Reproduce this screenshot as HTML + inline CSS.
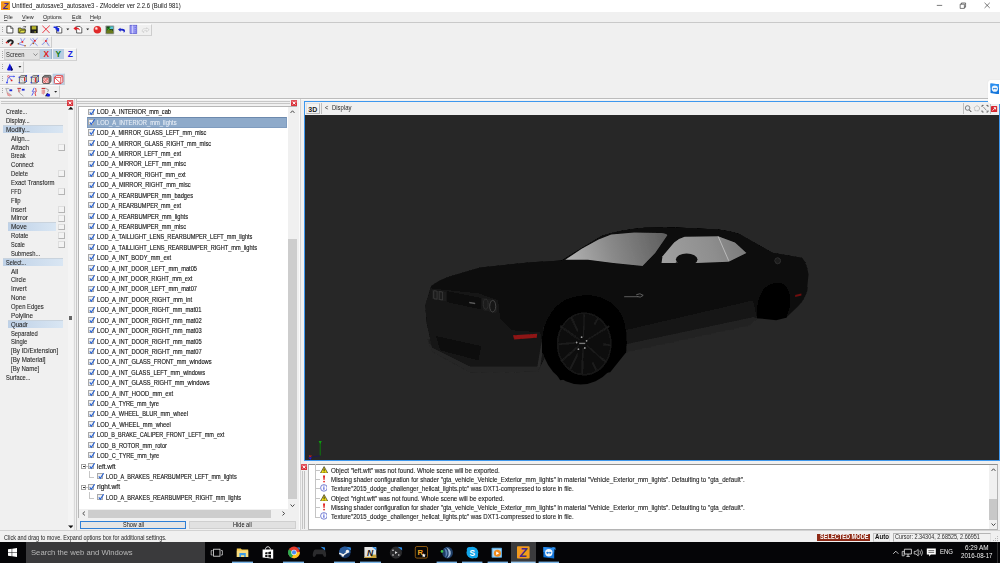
<!DOCTYPE html>
<html><head><meta charset="utf-8"><title>ZModeler</title>
<style>
*{box-sizing:border-box;margin:0;padding:0}
html,body{width:1000px;height:563px;overflow:hidden;background:#f0f0f0}
body{position:relative;font-family:"Liberation Sans",sans-serif;font-size:5.9px;color:#000;-webkit-font-smoothing:antialiased}
div,span,svg{position:absolute}
.t{white-space:nowrap}
#title{left:0;top:0;width:1000px;height:11.6px;background:#fff}
#title .tt{left:12.2px;top:1.5px;font-size:6.6px;line-height:8px;color:#111;white-space:nowrap}
#menubar{left:0;top:11.6px;width:1000px;height:11.3px;background:#f0f0f0;border-bottom:1px solid #c9c9c9}
#menubar span{top:1.6px;font-size:6.1px;line-height:8px;color:#222;white-space:nowrap;transform:scaleX(.89);transform-origin:0 0}
#menubar u{text-decoration-thickness:0.5px;text-underline-offset:0.5px;text-decoration-color:#666}
.tb{background:#f0f0f0;border-right:0.6px solid #cdcdcd;border-bottom:0.6px solid #d2d2d2;border-top:0.5px solid #fafafa}
.grip{left:1.6px;width:1px;top:2px;bottom:2px;background:repeating-linear-gradient(#a8a8a8 0 0.8px,transparent 0.8px 1.9px)}
/* left menu */
.mi{-webkit-text-stroke:0.1px #2a2a2a;font-size:6.5px;line-height:8.854px;height:8.854px;white-space:nowrap;color:#2a2a2a;transform-origin:0 0}
.hl{height:8.6px;background:linear-gradient(90deg,#bed1e7,#d9e6f3);border-top:0.5px solid #c9d3dd}
.ob{left:57.8px;width:6.8px;height:6.8px;border:0.5px solid #dedede;border-right-color:#b4b4b4;border-bottom-color:#b4b4b4;background:#f3f3f3}
/* list */
.li{-webkit-text-stroke:0.14px #161616;font-size:6.5px;line-height:10.4px;height:10.4px;white-space:nowrap;color:#161616;transform-origin:0 0}
.li.sel{color:#e8eef6;-webkit-text-stroke:0.1px #e8eef6}
.selbg{left:87.2px;width:199.6px;height:10.5px;background:#8eaaca;border:0.6px solid #7f9cbf;border-top-color:#6c89ad}
.cb{width:6.1px;height:6.1px;border:0.55px solid #a9a9a9;background:#efefef}
.cb svg{left:0;top:0;width:5.3px;height:5.3px;overflow:visible}
.cb svg path{fill:none;stroke:#2460d4;stroke-width:2.7}
.lg{-webkit-text-stroke:0.1px #1a1a1a;font-size:6.4px;line-height:9.375px;height:9.375px;white-space:nowrap;color:#1a1a1a;transform-origin:0 0}
</style></head><body>
<!-- title bar -->
<div id="title">
 <svg style="left:1px;top:1px;width:9px;height:9.4px" viewBox="0 0 18 18"><rect width="18" height="18" rx="1" fill="#f29a1c"/><text x="9" y="15" font-family="Liberation Sans,sans-serif" font-weight="bold" font-style="italic" font-size="17" text-anchor="middle" fill="#4a2a8a">Z</text></svg>
 <span class="tt" style="transform:scaleX(0.9093);transform-origin:0 0">Untitled_autosave3_autosave3 - ZModeler ver 2.2.6 (Build 981)</span>
 <svg style="left:862px;top:0;width:138px;height:11.6px" viewBox="0 0 138 11.6" fill="none" stroke="#222" stroke-width="0.6">
  <path d="M74.800 5.400h5.400"/><path d="M98.200 4.200h4.200v4.200h-4.200z M99.400 4.200v-1.200h4.200v4.200h-1.200"/><path d="M122.600 2.800l5.200 5.200m0-5.200l-5.200 5.200"/></svg>
</div>
<div id="menubar">
 <span style="left:4px"><u>F</u>ile</span><span style="left:22px"><u>V</u>iew</span><span style="left:43px"><u>O</u>ptions</span><span style="left:71.5px"><u>E</u>dit</span><span style="left:90px"><u>H</u>elp</span>
</div>
<!-- toolbars -->
<div class="tb" id="tb1" style="left:0;top:23.6px;width:152px;height:12.2px"><div class="grip"></div></div>
<div class="tb" id="tb2" style="left:0;top:35.8px;width:52px;height:12.2px"><div class="grip"></div></div>
<div class="tb" id="tb3" style="left:0;top:48px;width:76.6px;height:12.6px"><div class="grip"></div></div>
<div class="tb" id="tb4" style="left:0;top:60.6px;width:23.8px;height:12px"><div class="grip"></div></div>
<div class="tb" id="tb5" style="left:0;top:72.6px;width:64.8px;height:12.8px"><div class="grip"></div></div>
<div class="tb" id="tb6" style="left:0;top:85.4px;width:59.8px;height:12.2px"><div class="grip"></div></div>
<div style="left:0;top:97.9px;width:1000px;height:0.8px;background:#bcbcbc"></div>
<div style="left:0;top:98.7px;width:1000px;height:0.6px;background:#fafafa"></div>
<!-- toolbar row 1 icons -->
<svg style="left:0;top:23px;width:160px;height:76px" viewBox="0 23 160 76" fill="none">
 <!-- new -->
 <path d="M6.9 26.2h3.8l2.2 2.2v4.6H6.9z" fill="#fff" stroke="#222" stroke-width="0.75"/><path d="M10.7 26.2v2.2h2.2" stroke="#222" stroke-width="0.6"/>
 <!-- open -->
 <path d="M18.3 28h2.6l0.7 0.9h3.6v4H18.3z" fill="#b8b820" stroke="#222" stroke-width="0.7"/><path d="M19.2 32.9l1.6-2.7h5l-1.6 2.7z" fill="#e2e04a" stroke="#222" stroke-width="0.6"/><path d="M22.8 27.3c1-1 2-1 2.8-.2m0 0v-1m0 1h-1" stroke="#222" stroke-width="0.6"/>
 <!-- save -->
 <rect x="30.3" y="25.7" width="7.4" height="7.4" fill="#161616"/><rect x="31.7" y="26.2" width="4.6" height="3.3" fill="#b4b22a"/><rect x="32" y="30.6" width="4" height="2.5" fill="#2a2a2a"/><rect x="34.6" y="31" width="1" height="1.8" fill="#b4b22a"/>
 <!-- delete X -->
 <path d="M42.4 25.8c2.4 2.2 5 4.6 7.2 7.2M49.8 25.6c-2.6 2.2-5 4.6-7.4 7.4" stroke="#e8202a" stroke-width="0.85"/>
 <!-- import -->
 <path d="M56.6 26.6h3.4l1.8 1.8v4.6h-5.2z" fill="#fff" stroke="#222" stroke-width="0.7"/><path d="M53.6 26.4h4v1.6h1.6v3.4h-2.4v-1.8h-1.4v-1.6h-1.8z" fill="#1428e0"/>
 <path d="M66.3 28.6h3l-1.5 1.7z" fill="#222"/>
 <!-- export -->
 <path d="M76.6 26.4h3.4l1.8 1.8v4.8h-5.2z" fill="#fff" stroke="#222" stroke-width="0.7"/><path d="M73.4 28.4l2.6-2.2v1.3c2.2 0 3.8 1 4 3.2-0.9-1.2-2-1.6-4-1.5v1.4z" fill="#e81c24"/>
 <path d="M86.2 28.6h3l-1.5 1.7z" fill="#222"/>
 <!-- red ball -->
 <circle cx="97.4" cy="29.7" r="3.8" fill="#e02a2a"/><circle cx="96.4" cy="28.6" r="1.5" fill="#f6a0a0"/><circle cx="96.2" cy="28.3" r="0.7" fill="#fff"/>
 <!-- image (pressed) -->
 <rect x="105.4" y="25.4" width="8.8" height="8.8" rx="0.8" fill="#9c9c9c"/><rect x="106.4" y="26.4" width="6.8" height="6.8" fill="#1c4a1c"/><path d="M106.4 31.2l2-2.4 1.6 1.6 1.2-1 2 2v1.8h-6.8z" fill="#6a7a1a"/><rect x="109.8" y="26.4" width="3.4" height="2.6" fill="#58c0d8"/><path d="M107.4 28.4l1.2 1.4 1.8-2.6" stroke="#22d022" stroke-width="0.8"/>
 <!-- undo -->
 <path d="M118 29.6l2.6-1.8v1.1c2.6-.6 4.4.3 4.4 2 0 .9-.6 1.4-1.6 1.6.7-.9.4-2.1-2.8-1.9v1.2z" fill="#1a24c8"/>
 <!-- door -->
 <rect x="130" y="25.2" width="6.8" height="8.4" fill="#9a9af4" stroke="#4a4ac8" stroke-width="0.6"/><path d="M132.6 25.4v8" stroke="#d8d8ff" stroke-width="0.9"/><path d="M135.2 27v1M135.2 29.2v1M135.2 31.4v1" stroke="#4a4ac8" stroke-width="0.6"/>
 <!-- redo (disabled) -->
 <path d="M149.2 29.6l-2.6-1.8v1.1c-2.6-.6-4.4.3-4.4 2 0 .9.6 1.4 1.6 1.6-.7-.9-.4-2.1 2.8-1.9v1.2z" fill="#f4f4f4" stroke="#b4b4b4" stroke-width="0.45"/>

 <!-- row 2 -->
 <path d="M6.6 41.4c1.6-2.4 4.6-2.8 6.4-1.2 1 .9 1 2.2.2 3.2l-1.4 1.6-1.4-1.2 1.2-1.4c.5-.7-.9-1.7-2.2-.4l-1 1.2z" fill="#202020"/><path d="M6.4 41.6l1.5 1.2-.9 1-1.5-1.2zM10.3 43.9l1.5 1.2-.9 1-1.5-1.2z" fill="#e01c1c"/>
 <path d="M20.6 38.2l1.8 3.6 2.6-3.6M22.4 41.8l-4.2 2 6.8 2" stroke="#4a5ae8" stroke-width="0.6"/><circle cx="22.4" cy="41.9" r="0.95" fill="#f02020"/><circle cx="18.3" cy="43.8" r="0.8" fill="#b05a10"/><circle cx="25.1" cy="45.8" r="0.8" fill="#b05a10"/>
 <path d="M30 38.6l7.6 7.2M37.6 38.2l-7.8 7.6M32.6 38l2.4 3.6" stroke="#4a5ae8" stroke-width="0.6"/><circle cx="34.9" cy="40.8" r="0.95" fill="#f02020"/><circle cx="33.3" cy="43.4" r="0.8" fill="#b05a10"/>
 <path d="M43.8 38v8.4M47.6 38v8.4M41.6 40h8.6M41.6 43.8h8.6" stroke="#d8d8d8" stroke-width="0.5"/><path d="M47.6 38l-1.8 3-4 4M45.8 41l3.6 5.2" stroke="#4a5ae8" stroke-width="0.6"/><circle cx="45.9" cy="41" r="0.95" fill="#f02020"/>

 <!-- row 4 cone -->
 <path d="M9.8 63.4l3 6c0 1.6-5.8 1.6-5.8 0z" fill="#1418e0"/><path d="M10.8 65.6l2 3.8c0 .8-.8 1.2-1.6 1.3z" fill="#0a0a50"/>
 <path d="M18.4 66h3l-1.5 1.7z" fill="#222"/>

 <!-- row 5 -->
 <path d="M8.6 76.4h5.8M8.6 76.4L7 82.4M8.6 76.4l2.8 4" stroke="#2a3cf0" stroke-width="0.7"/><circle cx="8.4" cy="76.4" r="0.9" fill="#fff" stroke="#e02020" stroke-width="0.5"/><circle cx="11.6" cy="80.4" r="0.9" fill="#e02020"/><circle cx="7" cy="82.6" r="0.9" fill="#2a3cf0"/><path d="M13.6 75.4l1.4 1-1.4 1z" fill="#2a3cf0"/>
 <g id="cube1" stroke="#333" stroke-width="0.7"><path d="M19.4 77.2h5.4v5.8h-5.4z" fill="#e8e8e8"/><path d="M19.4 77.2l1.8-1.6h5.2l-1.6 1.6M26.4 75.600v5.600l-1.600 1.800" fill="none"/><path d="M20.600 78.600l3 3.600" stroke="#888" stroke-width="0.4"/></g>
 <path d="M24.6 77.4v3.600" stroke="#e82020" stroke-width="1"/><circle cx="19.200" cy="77.200" r="0.7" fill="#2a3cf0"/><circle cx="26.4" cy="75.800" r="0.7" fill="#2a3cf0"/><circle cx="19.200" cy="82.800" r="0.7" fill="#2a3cf0"/><circle cx="26.400" cy="81.200" r="0.700" fill="#2a3cf0"/>
 <g stroke="#333" stroke-width="0.7"><path d="M31.4 77.2h5.4v5.8h-5.4z" fill="#e8e8e8"/><path d="M31.4 77.2l1.8-1.6h5.2l-1.6 1.6M38.4 75.600v5.600l-1.600 1.800" fill="none"/><path d="M32.600 78.600l3 3.600" stroke="#888" stroke-width="0.4"/></g>
 <path d="M35.4 77.800v4.400" stroke="#e82020" stroke-width="1.1"/><circle cx="31.200" cy="77.200" r="0.7" fill="#2a3cf0"/><circle cx="38.4" cy="75.800" r="0.7" fill="#2a3cf0"/><circle cx="31.200" cy="82.800" r="0.7" fill="#2a3cf0"/><circle cx="38.400" cy="81.200" r="0.700" fill="#2a3cf0"/>
 <g stroke="#333" stroke-width="0.75"><path d="M44.6 75.400h5.200c.8 0 1.200.4 1.200 1.200v5l-1.800 1.800h-5.400c-.8 0-1.200-.4-1.200-1.200v-5z" fill="#8a8a8a"/><path d="M42.800 77.200h6.200v6" fill="none"/></g><rect x="43.200" y="77.600" width="5.400" height="5.400" fill="#f4c8c8"/><path d="M43.200 77.600l5.400 5.400M43.200 80.200l2.800 2.800M45.800 77.600l2.800 2.800M48.600 77.600l-5.400 5.400" stroke="#e02020" stroke-width="0.5"/>
 <rect x="52.600" y="73.600" width="11.600" height="11.200" fill="#b9cde2"/>
 <g stroke="#e02428" stroke-width="0.8"><path d="M56.400 75.600h5.200c.8 0 1.200.4 1.200 1.200v5l-1.800 1.800h-5.400c-.8 0-1.200-.4-1.200-1.200v-5z" fill="#fff"/><path d="M54.600 77.400h6.200v6M60.800 77.400l1.800-1.600" fill="none"/><path d="M55 78l5.400 5" /></g>

 <!-- row 6 -->
 <path d="M5.400 88.600h3.800M6 88.600l1.200 3.600 4.800 3.400" stroke="#9a9a9a" stroke-width="0.7"/><path d="M6.600 92.800l4.200 3M7 94.600l2.800 1.400" stroke="#e06a6a" stroke-width="0.8"/><rect x="9.400" y="89.400" width="2.800" height="1.800" fill="#1c28d8"/>
 <path d="M17.400 88.400h3.600" stroke="#c02020" stroke-width="0.9"/><path d="M18.200 89l1.400 4 3.800 3" stroke="#9a9a9a" stroke-width="0.7"/><path d="M18.600 89.400v2.800M19.800 89.400v2.400" stroke="#d85050" stroke-width="0.6"/><rect x="21.800" y="88.800" width="2.800" height="1.800" fill="#1c28d8"/>
 <path d="M34.200 87.800l-1.800 3.800 1 1-1.600 3" stroke="#2a3cf0" stroke-width="0.8"/><path d="M35.600 88l.6 3.400-1.200 1.600.8 3" stroke="#e02020" stroke-width="0.8"/><path d="M33 91.600h2.800" stroke="#8060c0" stroke-width="0.7"/>
 <path d="M41.600 88.400h3.800" stroke="#c02020" stroke-width="1"/><path d="M42.200 89.600v4.400M43.400 89.600v5M44.600 89.600v4" stroke="#e05050" stroke-width="0.6"/><path d="M45.600 88.400l3 1.400-1 2.200" stroke="#8a8a8a" stroke-width="0.8"/><path d="M45 96.200l2.200-3.400 2.600 3.400z" fill="#111"/><ellipse cx="48.200" cy="95" rx="1.900" ry="1.500" fill="#1418e8"/>
 <path d="M54.200 91h3l-1.500 1.700z" fill="#222"/>
</svg>
<!-- row 3 -->
<div style="left:4px;top:48.8px;width:35.6px;height:10.8px;background:#e1e1e1;border:0.5px solid #d2d2d2"></div>
<div class="t" style="left:5.6px;top:50.8px;font-size:6.6px;line-height:8px;color:#2a2a2a;transform:scaleX(.885);transform-origin:0 0">Screen</div>
<svg style="left:33px;top:53.2px;width:5px;height:3.2px" viewBox="0 0 10 6.400" fill="none" stroke="#444" stroke-width="1.1"><path d="M0.800 1l4.200 4.200L9.200 1"/></svg>
<div style="left:40.200px;top:49px;width:12px;height:10.400px;background:#b9cde2;border-right:0.5px solid #9ab0c8"></div>
<div style="left:52.600px;top:49px;width:11.600px;height:10.400px;background:#b9cde2"></div>
<div class="t" style="left:40.200px;top:49.600px;width:12px;text-align:center;font-size:8.400px;line-height:9.800px;font-weight:bold;color:#e01a1a">X</div>
<div class="t" style="left:52.600px;top:49.600px;width:11.600px;text-align:center;font-size:8.400px;line-height:9.800px;font-weight:bold;color:#0c7a14">Y</div>
<div class="t" style="left:64.600px;top:49.600px;width:11.600px;text-align:center;font-size:8.400px;line-height:9.800px;font-weight:bold;color:#1c20e0">Z</div>
<!-- left command panel -->
<div style="left:1px;top:101.3px;width:65.5px;height:0.5px;background:#c6c6c6"></div>
<div style="left:1px;top:103.3px;width:65.5px;height:0.5px;background:#c6c6c6"></div>
<svg class="xb" style="left:67.4px;top:99.6px;width:6.2px;height:6.2px" viewBox="0 0 12 12"><rect width="12" height="12" rx="1.5" fill="#d8323a"/><rect x="0.6" y="0.6" width="10.8" height="5" rx="1" fill="#ea6a70" opacity=".7"/><path d="M3.4 3.4l5.2 5.2m0-5.2l-5.2 5.2" stroke="#fff" stroke-width="1.9"/></svg>
<div id="vline73" style="left:68.2px;top:106px;width:5.2px;height:424px;background:#f4f4f4"></div>
<div style="left:73.6px;top:99px;width:0.5px;height:431px;background:#dadada"></div>
<div style="left:76.2px;top:99px;width:0.5px;height:431px;background:#c8c8c8"></div>
<svg style="left:67.6px;top:106.2px;width:5.6px;height:4px" viewBox="0 0 12 8"><path d="M1 6.5L6 1.2 11 6.5z" fill="#111"/><path d="M0.5 7.6h11" stroke="#111" stroke-width="1"/></svg>
<svg style="left:67.8px;top:524.8px;width:5.6px;height:4px" viewBox="0 0 12 8"><path d="M1 1.5L6 6.8 11 1.5z" fill="#111"/><path d="M0.5 0.4h11" stroke="#111" stroke-width="1"/></svg>
<div style="left:68.9px;top:316.2px;width:3px;height:3.6px;background:#666"></div>
<div class="mi" style="left:6px;top:108.20px;transform:scaleX(0.8424)">Create...</div>
<div class="mi" style="left:6px;top:117.05px;transform:scaleX(0.9029)">Display...</div>
<div class="hl" style="left:3px;width:60px;top:124.71px"></div>
<div class="mi" style="left:6px;top:125.91px;transform:scaleX(0.9842)">Modify...</div>
<div class="mi" style="left:11px;top:134.76px;transform:scaleX(0.9410)">Align...</div>
<div class="ob" style="top:143.92px"></div>
<div class="mi" style="left:11px;top:143.62px;transform:scaleX(0.9714)">Attach</div>
<div class="mi" style="left:11px;top:152.47px;transform:scaleX(0.8598)">Break</div>
<div class="mi" style="left:11px;top:161.32px;transform:scaleX(0.9335)">Connect</div>
<div class="ob" style="top:170.48px"></div>
<div class="mi" style="left:11px;top:170.18px;transform:scaleX(0.9048)">Delete</div>
<div class="mi" style="left:11px;top:179.03px;transform:scaleX(0.9193)">Exact Transform</div>
<div class="ob" style="top:188.19px"></div>
<div class="mi" style="left:11px;top:187.89px;transform:scaleX(0.8310)">FFD</div>
<div class="mi" style="left:11px;top:196.74px;transform:scaleX(0.9165)">Flip</div>
<div class="ob" style="top:205.89px"></div>
<div class="mi" style="left:11px;top:205.59px;transform:scaleX(0.9289)">Insert</div>
<div class="ob" style="top:214.75px"></div>
<div class="mi" style="left:11px;top:214.45px;transform:scaleX(1.0019)">Mirror</div>
<div class="hl" style="left:8px;width:47.5px;top:222.10px"></div>
<div class="ob" style="top:223.60px"></div>
<div class="mi" style="left:11px;top:223.30px;transform:scaleX(0.9877)">Move</div>
<div class="ob" style="top:232.46px"></div>
<div class="mi" style="left:11px;top:232.16px;transform:scaleX(0.9086)">Rotate</div>
<div class="ob" style="top:241.31px"></div>
<div class="mi" style="left:11px;top:241.01px;transform:scaleX(0.8487)">Scale</div>
<div class="mi" style="left:11px;top:249.86px;transform:scaleX(0.8912)">Submesh...</div>
<div class="hl" style="left:3px;width:60px;top:257.52px"></div>
<div class="mi" style="left:6px;top:258.72px;transform:scaleX(0.8559)">Select...</div>
<div class="mi" style="left:11px;top:267.57px;transform:scaleX(0.9967)">All</div>
<div class="mi" style="left:11px;top:276.43px;transform:scaleX(0.8969)">Circle</div>
<div class="mi" style="left:11px;top:285.28px;transform:scaleX(0.9658)">Invert</div>
<div class="mi" style="left:11px;top:294.13px;transform:scaleX(0.9588)">None</div>
<div class="mi" style="left:11px;top:302.99px;transform:scaleX(0.9062)">Open Edges</div>
<div class="mi" style="left:11px;top:311.84px;transform:scaleX(0.9665)">Polyline</div>
<div class="hl" style="left:8px;width:55px;top:319.50px"></div>
<div class="mi" style="left:11px;top:320.70px;transform:scaleX(0.9299)">Quadr</div>
<div class="mi" style="left:11px;top:329.55px;transform:scaleX(0.8934)">Separated</div>
<div class="mi" style="left:11px;top:338.40px;transform:scaleX(0.9021)">Single</div>
<div class="mi" style="left:11px;top:347.26px;transform:scaleX(0.9467)">[By ID/Extension]</div>
<div class="mi" style="left:11px;top:356.11px;transform:scaleX(0.9551)">[By Material]</div>
<div class="mi" style="left:11px;top:364.97px;transform:scaleX(0.9294)">[By Name]</div>
<div class="mi" style="left:6px;top:373.82px;transform:scaleX(0.8771)">Surface...</div><!-- object list panel -->
<div style="left:76px;top:101.3px;width:214px;height:0.5px;background:#c6c6c6"></div>
<div style="left:76px;top:103.3px;width:214px;height:0.5px;background:#c6c6c6"></div>
<svg class="xb" style="left:291.2px;top:99.6px;width:6.2px;height:6.2px" viewBox="0 0 12 12"><rect width="12" height="12" rx="1.5" fill="#d8323a"/><rect x="0.6" y="0.6" width="10.8" height="5" rx="1" fill="#ea6a70" opacity=".7"/><path d="M3.4 3.4l5.2 5.2m0-5.2l-5.2 5.2" stroke="#fff" stroke-width="1.9"/></svg>
<div style="left:78.4px;top:106.2px;width:219px;height:412px;background:#fff;border:0.55px solid #b6b6b6"></div>
<div id="vs" style="left:288.2px;top:106.8px;width:8.6px;height:402.6px;background:#f0f0f0"></div>
<div style="left:288.2px;top:239px;width:8.6px;height:260.3px;background:#cdcdcd"></div>
<svg style="left:290px;top:110px;width:5px;height:3.4px" viewBox="0 0 10 7" fill="none" stroke="#444" stroke-width="2"><path d="M1 6l4-4.4 4 4.4"/></svg>
<svg style="left:290px;top:503.8px;width:5px;height:3.4px" viewBox="0 0 10 7" fill="none" stroke="#444" stroke-width="2"><path d="M1 1l4 4.4 4-4.4"/></svg>
<div id="hs" style="left:79px;top:509.4px;width:217.8px;height:8.2px;background:#f0f0f0"></div>
<div style="left:88px;top:509.6px;width:183.4px;height:8.2px;background:#cdcdcd"></div>
<svg style="left:81.8px;top:511.4px;width:3.4px;height:5px" viewBox="0 0 7 10" fill="none" stroke="#444" stroke-width="2"><path d="M6 1L1.6 5 6 9"/></svg>
<svg style="left:281.8px;top:511.4px;width:3.4px;height:5px" viewBox="0 0 7 10" fill="none" stroke="#444" stroke-width="2"><path d="M1 1l4.4 4L1 9"/></svg>
<!-- tree expanders -->
<div style="left:81.4px;top:464.2px;width:4.6px;height:4.6px;border:0.5px solid #a4a4a4;background:#fff"></div><div style="left:82.6px;top:466.2px;width:2.2px;height:0.6px;background:#333"></div>
<div style="left:81.4px;top:485px;width:4.6px;height:4.6px;border:0.5px solid #a4a4a4;background:#fff"></div><div style="left:82.6px;top:487px;width:2.2px;height:0.6px;background:#333"></div>
<div style="left:89px;top:471px;width:0.6px;height:6.4px;background:#c6c6c6"></div><div style="left:89px;top:477px;width:5px;height:0.6px;background:#c6c6c6"></div>
<div style="left:89px;top:492px;width:0.6px;height:6.2px;background:#c6c6c6"></div><div style="left:89px;top:497.8px;width:5px;height:0.6px;background:#c6c6c6"></div>
<div style="left:86px;top:466.4px;width:2.4px;height:0.6px;background:#c6c6c6"></div><div style="left:86px;top:487.2px;width:2.4px;height:0.6px;background:#c6c6c6"></div>
<div class="cb" style="left:88.4px;top:108.60px"><svg viewBox="0 0 13 13"><path d="M2 6 L5.6 10.6 L14 -2" /></svg></div>
<div class="li" style="left:97.0px;top:107.40px;transform:scaleX(0.8755)">LOD_A_INTERIOR_mm_cab</div>
<div class="selbg" style="top:117.42px"></div>
<div class="cb" style="left:88.4px;top:119.02px"><svg viewBox="0 0 13 13"><path d="M2 6 L5.6 10.6 L14 -2" /></svg></div>
<div class="li sel" style="left:97.0px;top:117.82px;transform:scaleX(0.8922)">LOD_A_INTERIOR_mm_lights</div>
<div class="cb" style="left:88.4px;top:129.43px"><svg viewBox="0 0 13 13"><path d="M2 6 L5.6 10.6 L14 -2" /></svg></div>
<div class="li" style="left:97.0px;top:128.23px;transform:scaleX(0.8580)">LOD_A_MIRROR_GLASS_LEFT_mm_misc</div>
<div class="cb" style="left:88.4px;top:139.85px"><svg viewBox="0 0 13 13"><path d="M2 6 L5.6 10.6 L14 -2" /></svg></div>
<div class="li" style="left:97.0px;top:138.65px;transform:scaleX(0.8647)">LOD_A_MIRROR_GLASS_RIGHT_mm_misc</div>
<div class="cb" style="left:88.4px;top:150.27px"><svg viewBox="0 0 13 13"><path d="M2 6 L5.6 10.6 L14 -2" /></svg></div>
<div class="li" style="left:97.0px;top:149.07px;transform:scaleX(0.8613)">LOD_A_MIRROR_LEFT_mm_ext</div>
<div class="cb" style="left:88.4px;top:160.68px"><svg viewBox="0 0 13 13"><path d="M2 6 L5.6 10.6 L14 -2" /></svg></div>
<div class="li" style="left:97.0px;top:159.48px;transform:scaleX(0.8707)">LOD_A_MIRROR_LEFT_mm_misc</div>
<div class="cb" style="left:88.4px;top:171.10px"><svg viewBox="0 0 13 13"><path d="M2 6 L5.6 10.6 L14 -2" /></svg></div>
<div class="li" style="left:97.0px;top:169.90px;transform:scaleX(0.8699)">LOD_A_MIRROR_RIGHT_mm_ext</div>
<div class="cb" style="left:88.4px;top:181.52px"><svg viewBox="0 0 13 13"><path d="M2 6 L5.6 10.6 L14 -2" /></svg></div>
<div class="li" style="left:97.0px;top:180.32px;transform:scaleX(0.8785)">LOD_A_MIRROR_RIGHT_mm_misc</div>
<div class="cb" style="left:88.4px;top:191.93px"><svg viewBox="0 0 13 13"><path d="M2 6 L5.6 10.6 L14 -2" /></svg></div>
<div class="li" style="left:97.0px;top:190.73px;transform:scaleX(0.8712)">LOD_A_REARBUMPER_mm_badges</div>
<div class="cb" style="left:88.4px;top:202.35px"><svg viewBox="0 0 13 13"><path d="M2 6 L5.6 10.6 L14 -2" /></svg></div>
<div class="li" style="left:97.0px;top:201.15px;transform:scaleX(0.8613)">LOD_A_REARBUMPER_mm_ext</div>
<div class="cb" style="left:88.4px;top:212.77px"><svg viewBox="0 0 13 13"><path d="M2 6 L5.6 10.6 L14 -2" /></svg></div>
<div class="li" style="left:97.0px;top:211.57px;transform:scaleX(0.8747)">LOD_A_REARBUMPER_mm_lights</div>
<div class="cb" style="left:88.4px;top:223.18px"><svg viewBox="0 0 13 13"><path d="M2 6 L5.6 10.6 L14 -2" /></svg></div>
<div class="li" style="left:97.0px;top:221.98px;transform:scaleX(0.8707)">LOD_A_REARBUMPER_mm_misc</div>
<div class="cb" style="left:88.4px;top:233.60px"><svg viewBox="0 0 13 13"><path d="M2 6 L5.6 10.6 L14 -2" /></svg></div>
<div class="li" style="left:97.0px;top:232.40px;transform:scaleX(0.8627)">LOD_A_TAILLIGHT_LENS_REARBUMPER_LEFT_mm_lights</div>
<div class="cb" style="left:88.4px;top:244.02px"><svg viewBox="0 0 13 13"><path d="M2 6 L5.6 10.6 L14 -2" /></svg></div>
<div class="li" style="left:97.0px;top:242.82px;transform:scaleX(0.8674)">LOD_A_TAILLIGHT_LENS_REARBUMPER_RIGHT_mm_lights</div>
<div class="cb" style="left:88.4px;top:254.43px"><svg viewBox="0 0 13 13"><path d="M2 6 L5.6 10.6 L14 -2" /></svg></div>
<div class="li" style="left:97.0px;top:253.23px;transform:scaleX(0.8792)">LOD_A_INT_BODY_mm_ext</div>
<div class="cb" style="left:88.4px;top:264.85px"><svg viewBox="0 0 13 13"><path d="M2 6 L5.6 10.6 L14 -2" /></svg></div>
<div class="li" style="left:97.0px;top:263.65px;transform:scaleX(0.8760)">LOD_A_INT_DOOR_LEFT_mm_mat05</div>
<div class="cb" style="left:88.4px;top:275.27px"><svg viewBox="0 0 13 13"><path d="M2 6 L5.6 10.6 L14 -2" /></svg></div>
<div class="li" style="left:97.0px;top:274.07px;transform:scaleX(0.8746)">LOD_A_INT_DOOR_RIGHT_mm_ext</div>
<div class="cb" style="left:88.4px;top:285.68px"><svg viewBox="0 0 13 13"><path d="M2 6 L5.6 10.6 L14 -2" /></svg></div>
<div class="li" style="left:97.0px;top:284.48px;transform:scaleX(0.8760)">LOD_A_INT_DOOR_LEFT_mm_mat07</div>
<div class="cb" style="left:88.4px;top:296.10px"><svg viewBox="0 0 13 13"><path d="M2 6 L5.6 10.6 L14 -2" /></svg></div>
<div class="li" style="left:97.0px;top:294.90px;transform:scaleX(0.8856)">LOD_A_INT_DOOR_RIGHT_mm_int</div>
<div class="cb" style="left:88.4px;top:306.52px"><svg viewBox="0 0 13 13"><path d="M2 6 L5.6 10.6 L14 -2" /></svg></div>
<div class="li" style="left:97.0px;top:305.32px;transform:scaleX(0.8812)">LOD_A_INT_DOOR_RIGHT_mm_mat01</div>
<div class="cb" style="left:88.4px;top:316.93px"><svg viewBox="0 0 13 13"><path d="M2 6 L5.6 10.6 L14 -2" /></svg></div>
<div class="li" style="left:97.0px;top:315.73px;transform:scaleX(0.8829)">LOD_A_INT_DOOR_RIGHT_mm_mat02</div>
<div class="cb" style="left:88.4px;top:327.35px"><svg viewBox="0 0 13 13"><path d="M2 6 L5.6 10.6 L14 -2" /></svg></div>
<div class="li" style="left:97.0px;top:326.15px;transform:scaleX(0.8829)">LOD_A_INT_DOOR_RIGHT_mm_mat03</div>
<div class="cb" style="left:88.4px;top:337.77px"><svg viewBox="0 0 13 13"><path d="M2 6 L5.6 10.6 L14 -2" /></svg></div>
<div class="li" style="left:97.0px;top:336.57px;transform:scaleX(0.8829)">LOD_A_INT_DOOR_RIGHT_mm_mat05</div>
<div class="cb" style="left:88.4px;top:348.18px"><svg viewBox="0 0 13 13"><path d="M2 6 L5.6 10.6 L14 -2" /></svg></div>
<div class="li" style="left:97.0px;top:346.98px;transform:scaleX(0.8829)">LOD_A_INT_DOOR_RIGHT_mm_mat07</div>
<div class="cb" style="left:88.4px;top:358.60px"><svg viewBox="0 0 13 13"><path d="M2 6 L5.6 10.6 L14 -2" /></svg></div>
<div class="li" style="left:97.0px;top:357.40px;transform:scaleX(0.8837)">LOD_A_INT_GLASS_FRONT_mm_windows</div>
<div class="cb" style="left:88.4px;top:369.02px"><svg viewBox="0 0 13 13"><path d="M2 6 L5.6 10.6 L14 -2" /></svg></div>
<div class="li" style="left:97.0px;top:367.82px;transform:scaleX(0.8767)">LOD_A_INT_GLASS_LEFT_mm_windows</div>
<div class="cb" style="left:88.4px;top:379.43px"><svg viewBox="0 0 13 13"><path d="M2 6 L5.6 10.6 L14 -2" /></svg></div>
<div class="li" style="left:97.0px;top:378.23px;transform:scaleX(0.8830)">LOD_A_INT_GLASS_RIGHT_mm_windows</div>
<div class="cb" style="left:88.4px;top:389.85px"><svg viewBox="0 0 13 13"><path d="M2 6 L5.6 10.6 L14 -2" /></svg></div>
<div class="li" style="left:97.0px;top:388.65px;transform:scaleX(0.8915)">LOD_A_INT_HOOD_mm_ext</div>
<div class="cb" style="left:88.4px;top:400.27px"><svg viewBox="0 0 13 13"><path d="M2 6 L5.6 10.6 L14 -2" /></svg></div>
<div class="li" style="left:97.0px;top:399.07px;transform:scaleX(0.8712)">LOD_A_TYRE_mm_tyre</div>
<div class="cb" style="left:88.4px;top:410.68px"><svg viewBox="0 0 13 13"><path d="M2 6 L5.6 10.6 L14 -2" /></svg></div>
<div class="li" style="left:97.0px;top:409.48px;transform:scaleX(0.8746)">LOD_A_WHEEL_BLUR_mm_wheel</div>
<div class="cb" style="left:88.4px;top:421.10px"><svg viewBox="0 0 13 13"><path d="M2 6 L5.6 10.6 L14 -2" /></svg></div>
<div class="li" style="left:97.0px;top:419.90px;transform:scaleX(0.8876)">LOD_A_WHEEL_mm_wheel</div>
<div class="cb" style="left:88.4px;top:431.52px"><svg viewBox="0 0 13 13"><path d="M2 6 L5.6 10.6 L14 -2" /></svg></div>
<div class="li" style="left:97.0px;top:430.32px;transform:scaleX(0.8447)">LOD_B_BRAKE_CALIPER_FRONT_LEFT_mm_ext</div>
<div class="cb" style="left:88.4px;top:441.93px"><svg viewBox="0 0 13 13"><path d="M2 6 L5.6 10.6 L14 -2" /></svg></div>
<div class="li" style="left:97.0px;top:440.73px;transform:scaleX(0.8782)">LOD_B_ROTOR_mm_rotor</div>
<div class="cb" style="left:88.4px;top:452.35px"><svg viewBox="0 0 13 13"><path d="M2 6 L5.6 10.6 L14 -2" /></svg></div>
<div class="li" style="left:97.0px;top:451.15px;transform:scaleX(0.8704)">LOD_C_TYRE_mm_tyre</div>
<div class="cb" style="left:88.4px;top:462.77px"><svg viewBox="0 0 13 13"><path d="M2 6 L5.6 10.6 L14 -2" /></svg></div>
<div class="li" style="left:97.0px;top:461.57px;transform:scaleX(0.9850)">left.wft</div>
<div class="cb" style="left:97.0px;top:473.18px"><svg viewBox="0 0 13 13"><path d="M2 6 L5.6 10.6 L14 -2" /></svg></div>
<div class="li" style="left:105.6px;top:471.98px;transform:scaleX(0.8510)">LOD_A_BRAKES_REARBUMPER_LEFT_mm_lights</div>
<div class="cb" style="left:88.4px;top:483.60px"><svg viewBox="0 0 13 13"><path d="M2 6 L5.6 10.6 L14 -2" /></svg></div>
<div class="li" style="left:97.0px;top:482.40px;transform:scaleX(1.0107)">right.wft</div>
<div class="cb" style="left:97.0px;top:494.02px"><svg viewBox="0 0 13 13"><path d="M2 6 L5.6 10.6 L14 -2" /></svg></div>
<div class="li" style="left:105.6px;top:492.82px;transform:scaleX(0.8561)">LOD_A_BRAKES_REARBUMPER_RIGHT_mm_lights</div><!-- buttons -->
<div style="left:79.6px;top:520.6px;width:106.8px;height:8.4px;border:0.9px solid #2f7fd6;background:#e5e5e5"></div>
<div class="t" style="left:123px;top:520.9px;font-size:6.4px;line-height:8px;color:#111;transform:scaleX(0.8681);transform-origin:0 0">Show all</div>
<div style="left:188.6px;top:520.6px;width:107.2px;height:8.4px;border:0.6px solid #cfcfcf;background:#e1e1e1"></div>
<div class="t" style="left:233.2px;top:520.9px;font-size:6.4px;line-height:8px;color:#111;transform:scaleX(0.8784);transform-origin:0 0">Hide all</div>
<!-- panel separators -->
<div style="left:299px;top:99px;width:0.6px;height:431px;background:#fafafa"></div><div style="left:300.2px;top:99px;width:0.6px;height:431px;background:#d4d4d4"></div>
<!-- status bar -->
<div style="left:0;top:530.4px;width:1000px;height:0.6px;background:#d2d2d2"></div>
<div class="t" style="left:4px;top:533.6px;font-size:6.4px;line-height:8px;color:#1c1c1c;transform:scaleX(0.8596);transform-origin:0 0">Click and drag to move. Expand options box for additional settings.</div>
<div style="left:816.6px;top:533.6px;width:53.6px;height:7.4px;background:#8e2a16"></div>
<div class="t" style="left:819.5px;top:533.2px;font-size:6.5px;line-height:8px;color:#fff;font-weight:bold;transform:scaleX(0.8664);transform-origin:0 0">SELECTED MODE</div>
<div style="left:873px;top:533px;width:17.4px;height:8.6px;border:0.5px solid #e0e0e0;border-top-color:#c4c4c4;border-left-color:#c4c4c4;background:#f0f0f0"></div>
<div class="t" style="left:875px;top:533.3px;font-size:6.5px;line-height:8px;color:#111;font-weight:bold;transform:scaleX(0.9459);transform-origin:0 0">Auto</div>
<div style="left:892.6px;top:533px;width:98px;height:8.6px;border:0.5px solid #e0e0e0;border-top-color:#b4b4b4;border-left-color:#b4b4b4;background:#f0f0f0"></div>
<div class="t" style="left:895px;top:533.3px;font-size:6.4px;line-height:8px;color:#2a2a2a;transform:scaleX(0.8562);transform-origin:0 0">Cursor: 2.34304, 2.68525, 2.66951</div>
<svg style="left:992px;top:535px;width:7px;height:7px" viewBox="0 0 7 7" fill="#b8b8b8"><rect x="5" y="1" width="1" height="1"/><rect x="3" y="3" width="1" height="1"/><rect x="5" y="3" width="1" height="1"/><rect x="1" y="5" width="1" height="1"/><rect x="3" y="5" width="1" height="1"/><rect x="5" y="5" width="1" height="1"/></svg>
<!-- 3D viewport -->
<div id="vp" style="left:303.8px;top:101px;width:696.2px;height:360.4px;background:#3d97ee"></div>
<div style="left:304.8px;top:102px;width:694px;height:12.8px;background:#f0f0f0"></div>
<div style="left:305.6px;top:103.2px;width:14.4px;height:10.6px;border:0.5px solid #e2e2e2;border-right-color:#b8b8b8;border-bottom-color:#b8b8b8;background:#f3f3f3;font-weight:bold;font-size:7px;line-height:11.6px;text-align:center;color:#222">3D</div>
<div style="left:321.4px;top:103.2px;width:0.5px;height:10.8px;background:#bebebe"></div>
<div class="t" style="left:324.6px;top:104.2px;font-size:6.4px;line-height:8px;color:#222;transform:scaleX(.9);transform-origin:0 0">&lt;</div>
<div class="t" style="left:332.4px;top:104.4px;font-size:6.4px;line-height:8px;color:#2a2a2a;transform:scaleX(.929);transform-origin:0 0">Display</div>
<div style="left:963px;top:103.2px;width:0.5px;height:10.8px;background:#bebebe"></div>
<div style="left:989.8px;top:103.2px;width:0.5px;height:10.8px;background:#bebebe"></div>
<svg style="left:964px;top:104px;width:26px;height:10px" viewBox="0 0 26 10" fill="none">
 <circle cx="3.6" cy="4" r="2.3" stroke="#555" stroke-width="0.7" fill="#e8eef4"/><path d="M5.3 5.8l2 2.2" stroke="#333" stroke-width="1"/>
 <path d="M13 1.6l2.8 2-1 3.2h-3.6l-1-3.2z" stroke="#777" stroke-width="0.6" stroke-dasharray="0.8 0.5"/>
 <path d="M18 1.4h1.6M18 1.4v1.6M24 1.4h-1.6M24 1.4v1.6M18 8h1.6M18 8v-1.6M24 8h-1.6M24 8v-1.6" stroke="#333" stroke-width="0.7"/><path d="M19.4 3l3 3.4" stroke="#555" stroke-width="0.6"/>
</svg>
<svg style="left:991.4px;top:105.6px;width:6.2px;height:6.2px" viewBox="0 0 12 12"><rect width="12" height="12" rx="1.5" fill="#d6262e"/><path d="M3.2 8.8L8.6 3.4M5.4 3.2h3.4v3.4" stroke="#fff" stroke-width="1.8" fill="none"/></svg>
<!-- scene -->
<svg id="scene" style="left:304.8px;top:114.8px;width:693.8px;height:345.4px" viewBox="304.8 114.8 693.8 345.4">
 <defs>
  <linearGradient id="gws" x1="565" y1="262" x2="665" y2="232" gradientUnits="userSpaceOnUse"><stop offset="0" stop-color="#b6b6b6"/><stop offset=".45" stop-color="#8a8a8a"/><stop offset="1" stop-color="#5e5e5e"/></linearGradient>
  <linearGradient id="gsw" x1="662" y1="262" x2="745" y2="238" gradientUnits="userSpaceOnUse"><stop offset="0" stop-color="#a0a0a0"/><stop offset=".6" stop-color="#8e8e8e"/><stop offset="1" stop-color="#7a7a7a"/></linearGradient>
  <linearGradient id="gbody" x1="0" y1="230" x2="0" y2="360" gradientUnits="userSpaceOnUse"><stop offset="0" stop-color="#0a0a0a"/><stop offset=".35" stop-color="#0f0f0f"/><stop offset="1" stop-color="#161616"/></linearGradient>
  <radialGradient id="gbg" cx="620" cy="330" r="420" gradientUnits="userSpaceOnUse"><stop offset="0" stop-color="#2b2b2b"/><stop offset="1" stop-color="#262626"/></radialGradient>
  <filter id="bl" x="-5%" y="-5%" width="110%" height="110%"><feGaussianBlur stdDeviation="0.5"/></filter>
 </defs>
 <rect x="304" y="114" width="696" height="348" fill="#272727"/>
 <g filter="url(#bl)">
 <!-- lower lip / splitter -->
 <path d="M427.500 339L432 351 470 372 538 371 546 352 500 352 440 338z" fill="#1e1e1e"/>
 <path d="M428 343L432 351.500 470 372.500 538 371.500 540 366 472 366 436 347z" fill="#252525"/>
 <!-- main body -->
 <path d="M425.200 305L430.500 287Q438 279.500 452 275.500L480 267.200 531 262 562 260.300Q584 246 602 235.500 620 229.800 644.500 227.600L676 227.200 718 229.300Q731 231 739 233.900L772 252.500 801.500 257.500Q807.500 264 808.200 274L807 291Q804 300 798 306L786 317.500 757 318 752 321 624 352 545 356 540 366 470 366 432 347 426.400 322z" fill="#0f0f0f"/>
 <path d="M562 260.300Q584 246 602 235.500 620 229.800 644.500 227.600L676 227.200 718 229.300Q731 231 739 233.900L772 252.500 801.500 257.500 806 263 770 262 746 253 735 242 718 236 684 236.600 667 235 661 233 634 232 611 234.300 598 239.200 581 248.600z" fill="#0a0a0a"/>
 <path d="M624 330L753 300 757 318 752 321 624 352z" fill="#141414"/>
 <!-- side skirt lighter strip -->
 <path d="M622 344.800L753.500 316.800 757 318 750 325.400 622 353z" fill="#242424"/>
 <!-- hood top darker -->
 <path d="M430.500 286Q440 279 452 275.500L480 267.200 531 262 562 260.300 588 259.500 613 263 642 266 619 266.500 559 270 514 277 494 287 470 288.500 445 287.500z" fill="#0a0a0a"/>
 <!-- front fascia -->
 <path d="M425.200 305L430.500 288 478 293 498 300 500 318 512 330 540 332 545 356 540 366 470 366 432 347 426.400 322z" fill="#151515"/>
 <path d="M446 301.500L481 309 481 298 447 291z" fill="#0c0c0c"/>
 <path d="M436 336L440 350 478 360 481 346z" fill="#0e0e0e"/>
 <!-- headlights -->
 <path d="M431.500 289.500L446 291.500 446.500 301.500 432 299z" fill="#1e1e1e"/><path d="M433.500 290.500l3.400 .5v8l-3.400-.6zM439 291.300l3.400 .5v8l-3.400-.6z" fill="none" stroke="#3c3c3c" stroke-width=".8"/>
 <path d="M481 297L495 300Q498 306 496.500 313L483 310.500z" fill="#1c1c1c"/><ellipse cx="492.500" cy="306" rx="3" ry="5.800" fill="#161616" stroke="#484848" stroke-width=".9"/><ellipse cx="485.500" cy="304" rx="2.400" ry="5" fill="none" stroke="#343434" stroke-width=".7"/>
 <path d="M469 301.500l6 1v1.600l-6-1z" fill="#5a5a5a"/>
 <path d="M543.600 327L546 328 540 367 537 367z" fill="#2a2a2a"/>
 <!-- red marker -->
 <path d="M512.800 335L537 333.600 536.600 337.500 514 339.400z" fill="#8e1212"/>
 <!-- rear wheel well -->
 <path d="M757 318Q755 300 764 288 774 280 784 284 792 292 790 306L786 317.500 776 320z" fill="#020202"/>
 <!-- front wheel arch + tyre -->
 <path d="M542 352Q541 322 556 306 570 294 590 295 612 297 622 316 628 330 626 352L610 372 560 380z" fill="#010101"/>
 <ellipse cx="580.500" cy="341.500" rx="39" ry="42.800" fill="#020202"/>
 <ellipse cx="584" cy="343.700" rx="26.600" ry="30.700" fill="#0d0d0d" stroke="#171717" stroke-width="1.600"/>
 <g stroke="#1b1b1b" stroke-width="2" fill="none"><path d="M583 342L584 314M583 342L560 326M583 342L561 361M583 342L582 374M583 342L606 362M583 342L609 326M583 342L571 317M583 342L598 318M583 342L558 344M583 342L570 369M583 342L596 370M583 342L611 345"/></g>
 <ellipse cx="589" cy="343" rx="14" ry="20" fill="#060606" opacity=".55"/>
 <g stroke="#1a1a1a" stroke-width="1.600" fill="none"><path d="M583 342L584 316M583 342L562 328M583 342L563 359M583 342L582 371M583 342L603 360M583 342L606 328"/></g>
 <ellipse cx="583" cy="342.300" rx="4.600" ry="5.400" fill="#0c0c0c"/>
 <g fill="#9a9a9a"><circle cx="581.400" cy="337" r=".9"/><circle cx="586.400" cy="340.600" r=".9"/><circle cx="584.600" cy="347.800" r=".9"/><circle cx="578.200" cy="349" r=".9"/><circle cx="576.400" cy="342.300" r=".9"/></g>
 <path d="M579 342.500h6v1.400h-6z" fill="#777"/>
 <path d="M560 261Q584 246 602 235.500 620 229.800 644.500 227.600L676 227.200 718 229.300Q731 231 739 233.900L772 252.500 790 256 770 262 748 256 730 263 697 265 661 265 642 267.500 613 264 588 260.500z" fill="#080808"/>
 <!-- windows -->
 <path d="M565 259.600L581.500 248.600 598.300 239.200 611 234.300 634 232.200 661.300 232.900Q666 233.300 667.200 235L655 252.800 642.400 265.800 613 262.900 587.800 259.500z" fill="url(#gws)"/>
 <path d="M661.300 262.900L662.300 256 673.900 242.300Q679 238 684.400 236.600L718 236 734.800 242.300 746.300 252.800 728.500 261.600 697 262.900z" fill="url(#gsw)"/>
 <path d="M718 236.300L728.500 260.500" stroke="#d0d0d0" stroke-width=".7" fill="none"/>
 <!-- mirror -->
 <ellipse cx="686.500" cy="259.400" rx="10.800" ry="6" fill="#0b0b0b"/><path d="M676 262l-6 7 8 1 6-6z" fill="#0b0b0b"/>
 <!-- fuel cap / badge / rear marker -->
 <circle cx="777.500" cy="260.500" r="3" fill="#1c1c1c" stroke="#3a3a3a" stroke-width=".7"/>
 <path d="M624 296.500h14M636 294.600q4-2.400 7 .6-3 3-6 1" stroke="#6e6e6e" stroke-width=".8" fill="none"/>
 <path d="M795 294.800l6.200-1.400v2l-6.200 1.400z" fill="#701010"/>
 </g>
 <!-- axis gizmo -->
 <path d="M320 455.500V441.400" stroke="#0c7a0c" stroke-width="1"/><path d="M318.400 440.800h3.200l-1.600 3z" fill="#10a010"/>
 <path d="M320 455.500l-8 1.400" stroke="#1a1a50" stroke-width="1"/><path d="M308.600 455l3.400 .6-2.600 1.600z" fill="#d01818"/><path d="M308 457.500l3.400-.4-.8 2.400z" fill="#1a1ae0"/>
</svg>
<!-- teamviewer tab -->
<div style="left:987.8px;top:80.2px;width:14px;height:23.6px;background:#fff;border-radius:2.4px 0 0 2.4px;box-shadow:0 0 1px rgba(0,0,0,.15)"></div>
<svg style="left:989.8px;top:82.6px;width:9.6px;height:11.8px" viewBox="0 0 19 23"><path d="M1 0.6L18 2.2V22.4L1 19.6z" fill="#1677dc"/><path d="M1 0.6L18 2.2V10L1 9z" fill="#2b8ff0"/><circle cx="9.6" cy="11" r="6.2" fill="#eef5fc"/><path d="M5.4 11l2.6-2v1.3h3.4V9l2.6 2-2.6 2v-1.3H8V13z" fill="#1677dc"/></svg>
<!-- log panel -->
<svg class="xb" style="left:301.2px;top:464px;width:6.2px;height:6.2px" viewBox="0 0 12 12"><rect width="12" height="12" rx="1.5" fill="#d8323a"/><rect x="0.6" y="0.6" width="10.8" height="5" rx="1" fill="#ea6a70" opacity=".7"/><path d="M3.4 3.4l5.2 5.2m0-5.2l-5.2 5.2" stroke="#fff" stroke-width="1.9"/></svg>
<div style="left:302.2px;top:471px;width:0.5px;height:58px;background:#c4c4c4"></div>
<div style="left:304px;top:471px;width:0.5px;height:58px;background:#c0c0c0"></div>
<div style="left:307.6px;top:463.8px;width:690.2px;height:66px;background:#fff;border:0.55px solid #b4b4b4;border-top:0.7px solid #8e8e8e"></div>
<div style="left:989.4px;top:464.6px;width:8px;height:64.6px;background:#f0f0f0"></div>
<div style="left:989.4px;top:499px;width:8px;height:20.8px;background:#c8c8c8"></div>
<svg style="left:990.8px;top:467.6px;width:5px;height:3.4px" viewBox="0 0 10 7" fill="none" stroke="#444" stroke-width="2"><path d="M1 6l4-4.4 4 4.4"/></svg>
<svg style="left:990.8px;top:523px;width:5px;height:3.4px" viewBox="0 0 10 7" fill="none" stroke="#444" stroke-width="2"><path d="M1 1l4 4.4 4-4.4"/></svg>
<div style="left:315px;top:464.4px;width:0.5px;height:52.4px;background:#c4c4c4"></div>
<div style="left:315px;top:469.70px;width:4.6px;height:0.5px;background:#c4c4c4"></div>
<svg style="left:319.6px;top:465.50px;width:8.2px;height:7.8px" viewBox="0 0 16 15"><path d="M8 1L15.2 14H0.8z" fill="#f4e21a" stroke="#222" stroke-width="1.3" stroke-linejoin="round"/><path d="M8 5v4.6" stroke="#111" stroke-width="1.7"/><circle cx="8" cy="11.8" r="1" fill="#111"/></svg>
<div class="lg" style="left:331px;top:465.50px;transform:scaleX(0.9734)">Object &quot;left.wft&quot; was not found. Whole scene will be exported.</div>
<div style="left:315px;top:479.07px;width:4.6px;height:0.5px;background:#c4c4c4"></div>
<svg style="left:321.6px;top:475.07px;width:4px;height:8px" viewBox="0 0 8 16"><path d="M2 1h4.2L5 10H3.2z" fill="#e01818"/><circle cx="4.1" cy="13.2" r="1.7" fill="#e01818"/></svg>
<div class="lg" style="left:331px;top:474.88px;transform:scaleX(0.9652)">Missing shader configuration for shader &quot;gta_vehicle_Vehicle_Exterior_mm_lights&quot; in material &quot;Vehicle_Exterior_mm_lights&quot;. Defaulting to &quot;gta_default&quot;.</div>
<div style="left:315px;top:488.45px;width:4.6px;height:0.5px;background:#c4c4c4"></div>
<svg style="left:319.6px;top:484.05px;width:7.8px;height:7.8px" viewBox="0 0 16 16"><circle cx="8" cy="8" r="6.8" fill="#fff" stroke="#4a55c0" stroke-width="1.5"/><path d="M8 6.6v5.2" stroke="#1c2fd0" stroke-width="1.9"/><circle cx="8" cy="4.2" r="1.1" fill="#1c2fd0"/></svg>
<div class="lg" style="left:331px;top:484.25px;transform:scaleX(0.9529)">Texture&quot;2015_dodge_challenger_hellcat_lights.ptc&quot; was DXT1-compressed to store in file.</div>
<div style="left:315px;top:497.82px;width:4.6px;height:0.5px;background:#c4c4c4"></div>
<svg style="left:319.6px;top:493.62px;width:8.2px;height:7.8px" viewBox="0 0 16 15"><path d="M8 1L15.2 14H0.8z" fill="#f4e21a" stroke="#222" stroke-width="1.3" stroke-linejoin="round"/><path d="M8 5v4.6" stroke="#111" stroke-width="1.7"/><circle cx="8" cy="11.8" r="1" fill="#111"/></svg>
<div class="lg" style="left:331px;top:493.62px;transform:scaleX(0.9778)">Object &quot;right.wft&quot; was not found. Whole scene will be exported.</div>
<div style="left:315px;top:507.20px;width:4.6px;height:0.5px;background:#c4c4c4"></div>
<svg style="left:321.6px;top:503.20px;width:4px;height:8px" viewBox="0 0 8 16"><path d="M2 1h4.2L5 10H3.2z" fill="#e01818"/><circle cx="4.1" cy="13.2" r="1.7" fill="#e01818"/></svg>
<div class="lg" style="left:331px;top:503.00px;transform:scaleX(0.9652)">Missing shader configuration for shader &quot;gta_vehicle_Vehicle_Exterior_mm_lights&quot; in material &quot;Vehicle_Exterior_mm_lights&quot;. Defaulting to &quot;gta_default&quot;.</div>
<div style="left:315px;top:516.58px;width:4.6px;height:0.5px;background:#c4c4c4"></div>
<svg style="left:319.6px;top:512.18px;width:7.8px;height:7.8px" viewBox="0 0 16 16"><circle cx="8" cy="8" r="6.8" fill="#fff" stroke="#4a55c0" stroke-width="1.5"/><path d="M8 6.6v5.2" stroke="#1c2fd0" stroke-width="1.9"/><circle cx="8" cy="4.2" r="1.1" fill="#1c2fd0"/></svg>
<div class="lg" style="left:331px;top:512.38px;transform:scaleX(0.9529)">Texture&quot;2015_dodge_challenger_hellcat_lights.ptc&quot; was DXT1-compressed to store in file.</div><!-- taskbar -->
<div id="taskbar" style="left:0;top:542px;width:1000px;height:21px;background:#050507"></div>
<svg style="left:8.4px;top:547.8px;width:9px;height:9px" viewBox="0 0 18 18" fill="#fff"><path d="M0 2.600L7.400 1.600V8.600H0zM8.400 1.400L18 0V8.600H8.400zM0 9.600H7.400V16.600L0 15.600zM8.400 9.600H18V18L8.400 16.700z"/></svg>
<div style="left:25.600px;top:542px;width:179px;height:21px;background:#3a3a3c"></div>
<div class="t" style="left:31.400px;top:548.400px;font-size:7.600px;line-height:10px;color:#b8b8b8;transform:scaleX(1.0105);transform-origin:0 0">Search the web and Windows</div>
<div style="left:511px;top:542px;width:24.600px;height:21px;background:#3b3b3d"></div>
<svg style="left:205px;top:542px;width:795px;height:21px" viewBox="205 542 795 21" fill="none">
 <!-- underlines -->
 <g fill="#7db8ea"><rect x="232" y="561.600" width="21" height="1.400"/><rect x="283" y="561.600" width="21" height="1.400"/><rect x="334" y="561.600" width="21" height="1.400"/><rect x="360" y="561.600" width="21" height="1.400"/><rect x="436.600" y="561.600" width="20.400" height="1.400"/><rect x="462" y="561.600" width="20.400" height="1.400"/><rect x="487.600" y="561.600" width="20.400" height="1.400"/><rect x="511" y="561.600" width="24.600" height="1.400" fill="#9ccbf2"/><rect x="538.600" y="561.600" width="20.400" height="1.400"/></g>
 <!-- task view -->
 <rect x="213.600" y="549.200" width="6.400" height="7" stroke="#e8e8e8" stroke-width=".8"/><path d="M212.600 550.600h-1.400v4.400h1.400M221 550.600h1.400v4.400h-1.400" stroke="#e8e8e8" stroke-width=".7"/>
 <!-- explorer -->
 <path d="M236.800 548.400h4l1 1.200h6.400v7.400h-11.400z" fill="#f3c94e"/><path d="M236.800 550.600h11.400v6.400h-11.400z" fill="#f8dc7e"/><path d="M239.400 553h6.400v4h-6.400z" fill="#3b9be4"/><path d="M241 555.200h3.200v1.800h-3.200z" fill="#f8dc7e"/>
 <!-- store -->
 <path d="M262.600 549.600h10.600v9.200l-10.600-1.200z" fill="#fff"/><path d="M265.400 549.600c0-3.800 5-3.800 5 0" stroke="#fff" stroke-width=".9"/><path d="M265.200 552.400l2.300-.3v2.200h-2.300zM268.300 552l2.700-.4v2.700h-2.700zM265.200 555.100h2.300v2.100l-2.300-.3zM268.300 555.100h2.700v2.600l-2.700-.4z" fill="#111"/>
 <!-- chrome -->
 <circle cx="294" cy="552.400" r="5.800" fill="#e33b2e"/><path d="M294 552.400L288.900 549.600A5.800 5.800 0 0 0 292 557.850z" fill="#2da94f"/><path d="M294 552.400L292 557.850A5.800 5.800 0 0 0 299.800 552z" fill="#fcc31e"/><path d="M294 552.400L288.900 549.600A5.800 5.800 0 0 0 291.200 557.500L294 552.400z" fill="#2da94f"/><circle cx="294" cy="552.400" r="2.700" fill="#f4f4f4"/><circle cx="294" cy="552.400" r="2.100" fill="#4a8af4"/>
 <path d="M297 547.200l3 2.800-.2-2.400z" fill="#2f8ee8"/>
 <!-- controller -->
 <path d="M315.400 549.400h8.200c2 0 3 5 2.400 6.800-.5 1.200-2 .8-2.700-.8l-.6-1.200h-6.400l-.6 1.200c-.7 1.600-2.200 2-2.700.8-.6-1.800.4-6.800 2.400-6.800z" fill="#2b2b2d"/><path d="M320.600 546.800l4.600 3.600-.2-2.800z" fill="#2f8ee8"/>
 <!-- steam -->
 <circle cx="344.800" cy="552.400" r="5.800" fill="#16335f"/><path d="M339 552.400a5.800 5.800 0 0 1 11.600 0c-3 1.600-8 1.800-11.600 0z" fill="#2a5a9a"/><path d="M339.200 553.200l4.200 1.800 3.600-2.600" stroke="#f0f0f0" stroke-width="1.500"/><circle cx="347.400" cy="551.400" r="1.700" fill="#f0f0f0"/><circle cx="342.800" cy="555.400" r="1.300" fill="#f0f0f0"/><path d="M346.400 546.800l4.600 3.600-.2-2.800z" fill="#2f8ee8"/>
 <!-- N -->
 <rect x="364.400" y="547" width="11.800" height="11" fill="#e4e4e4"/><path d="M371 558v-3.400h5.200v3.400z" fill="#c9a23a"/><path d="M364.400 558l11.800 0v-1.200h-11.800z" fill="#c9a23a"/><text x="370.200" y="556" font-family="Liberation Sans,sans-serif" font-weight="bold" font-style="italic" font-size="8.600" text-anchor="middle" fill="#151515">N</text><path d="M371.800 546.800l4.600 3.600-.2-2.800z" fill="#2f8ee8"/>
 <!-- reel -->
 <circle cx="395.900" cy="552.600" r="5.600" fill="#2a2a2c"/><circle cx="395.900" cy="552.600" r="5.600" stroke="#3c3c3e" stroke-width=".6"/><g fill="#ddd"><circle cx="393" cy="550.200" r=".8"/><circle cx="393" cy="555" r=".8"/><circle cx="398.800" cy="555" r=".8"/><path d="M395 551.200l2.600 1.400-2.600 1.400z"/></g><path d="M397.600 546.800l4.600 3.600-.2-2.800z" fill="#2f8ee8"/>
 <!-- rockstar -->
 <rect x="415.300" y="546.500" width="12.200" height="11.600" rx="1.600" fill="#070707" stroke="#c47a12" stroke-width=".7"/><text x="420.200" y="555" font-family="Liberation Sans,sans-serif" font-weight="bold" font-size="7.600" text-anchor="middle" fill="#f2a322">R</text><path d="M423.800 553.200l.6 1.400 1.500.1-1.200 1 .4 1.500-1.300-.8-1.300.8.400-1.500-1.200-1 1.500-.1z" fill="#fff"/>
 <!-- globe -->
 <ellipse cx="447.600" cy="552.600" rx="5.400" ry="5.800" fill="#1d3d66"/><path d="M446 547.200c3.400 1 5.200 3.400 4.800 6.400-.3 2.400-2 4-4 4.600 1.400-1.600 2-3.400 1.800-5.800-.2-2.200-1.200-4-2.600-5.200z" fill="#9fb8d6"/><path d="M444.200 548c2.400 1.200 3.400 3 3.200 5.400-.2 1.800-1 3.200-2.400 4.200.6-1.400.8-3 .6-4.800-.2-1.800-.7-3.400-1.400-4.800z" fill="#5d84b4"/><circle cx="442" cy="551.400" r="1.300" fill="#3fc04a"/>
 <!-- skype -->
 <circle cx="472.400" cy="552.600" r="5.900" fill="#12a5ea"/><circle cx="469.400" cy="549.600" r="2.600" fill="#12a5ea"/><circle cx="475.400" cy="555.600" r="2.600" fill="#12a5ea"/><text x="472.400" y="555.600" font-family="Liberation Sans,sans-serif" font-weight="bold" font-size="8.400" text-anchor="middle" fill="#fff">S</text>
 <!-- media -->
 <rect x="491.600" y="547.800" width="10.400" height="10" rx=".8" fill="#5aa9e0"/><rect x="492.600" y="548.800" width="8.400" height="8" fill="#a8d4f2"/><circle cx="497.400" cy="553.200" r="3.500" fill="#f08a1c"/><path d="M496.200 551.400l3 1.800-3 1.800z" fill="#fff"/>
 <!-- Z -->
 <rect x="517" y="546.200" width="12.600" height="12.400" rx=".8" fill="#f29a1c"/><text x="523.300" y="557" font-family="Liberation Sans,sans-serif" font-weight="bold" font-style="italic" font-size="12" text-anchor="middle" fill="#45278a">Z</text>
 <!-- teamviewer -->
 <path d="M543.400 547l10.800 1v10.600l-10.800-1.400z" fill="#1274d8"/><path d="M543.400 547l10.800 1v4.600l-10.800-.6z" fill="#2c8ff0"/><circle cx="548.800" cy="552.800" r="3.700" fill="#eef5fc"/><path d="M546 552.800l1.800-1.400v.9h2v-.9l1.800 1.400-1.800 1.400v-.9h-2v.9z" fill="#1274d8"/><path d="M551.400 546.800l4.200 3.400-.2-2.600z" fill="#2f8ee8"/>
 <!-- tray -->
 <path d="M893.200 553.800l2.600-2.600 2.600 2.600" stroke="#f0f0f0" stroke-width=".8"/>
 <path d="M904.400 549.200h7v4.800h-7z M906.400 556.400h3.400M908 554v2.400" stroke="#f0f0f0" stroke-width=".8"/><path d="M902.200 551.400h2v4.400h-2z" fill="#050507" stroke="#f0f0f0" stroke-width=".7"/>
 <path d="M914.200 551.400h1.800l2.200-2v6.600l-2.200-2h-1.800z" stroke="#f0f0f0" stroke-width=".7"/><path d="M919.800 550.600q1.400 2 0 4M921.400 549.400q2.200 3.200 0 6.400" stroke="#f0f0f0" stroke-width=".7"/>
 <path d="M926.800 548.600h9v6h-5l-1.600 1.800v-1.800h-2.400z" fill="#fff"/><path d="M928.400 550.600h5.800M928.400 552.400h5.800" stroke="#111" stroke-width=".6"/>
 <rect x="997.200" y="542" width=".5" height="21" fill="#555"/>
</svg>
<div class="t" style="left:940.400px;top:548px;font-size:6.600px;line-height:8px;color:#f2f2f2;transform:scaleX(0.9089);transform-origin:0 0">ENG</div>
<div class="t" style="left:965px;top:543.800px;font-size:6.500px;line-height:8px;color:#f2f2f2;transform:scaleX(0.9854);transform-origin:0 0">6:29 AM</div>
<div class="t" style="left:961px;top:552.200px;font-size:6.500px;line-height:8px;color:#f2f2f2;transform:scaleX(0.9474);transform-origin:0 0">2016-08-17</div>
</body></html>
